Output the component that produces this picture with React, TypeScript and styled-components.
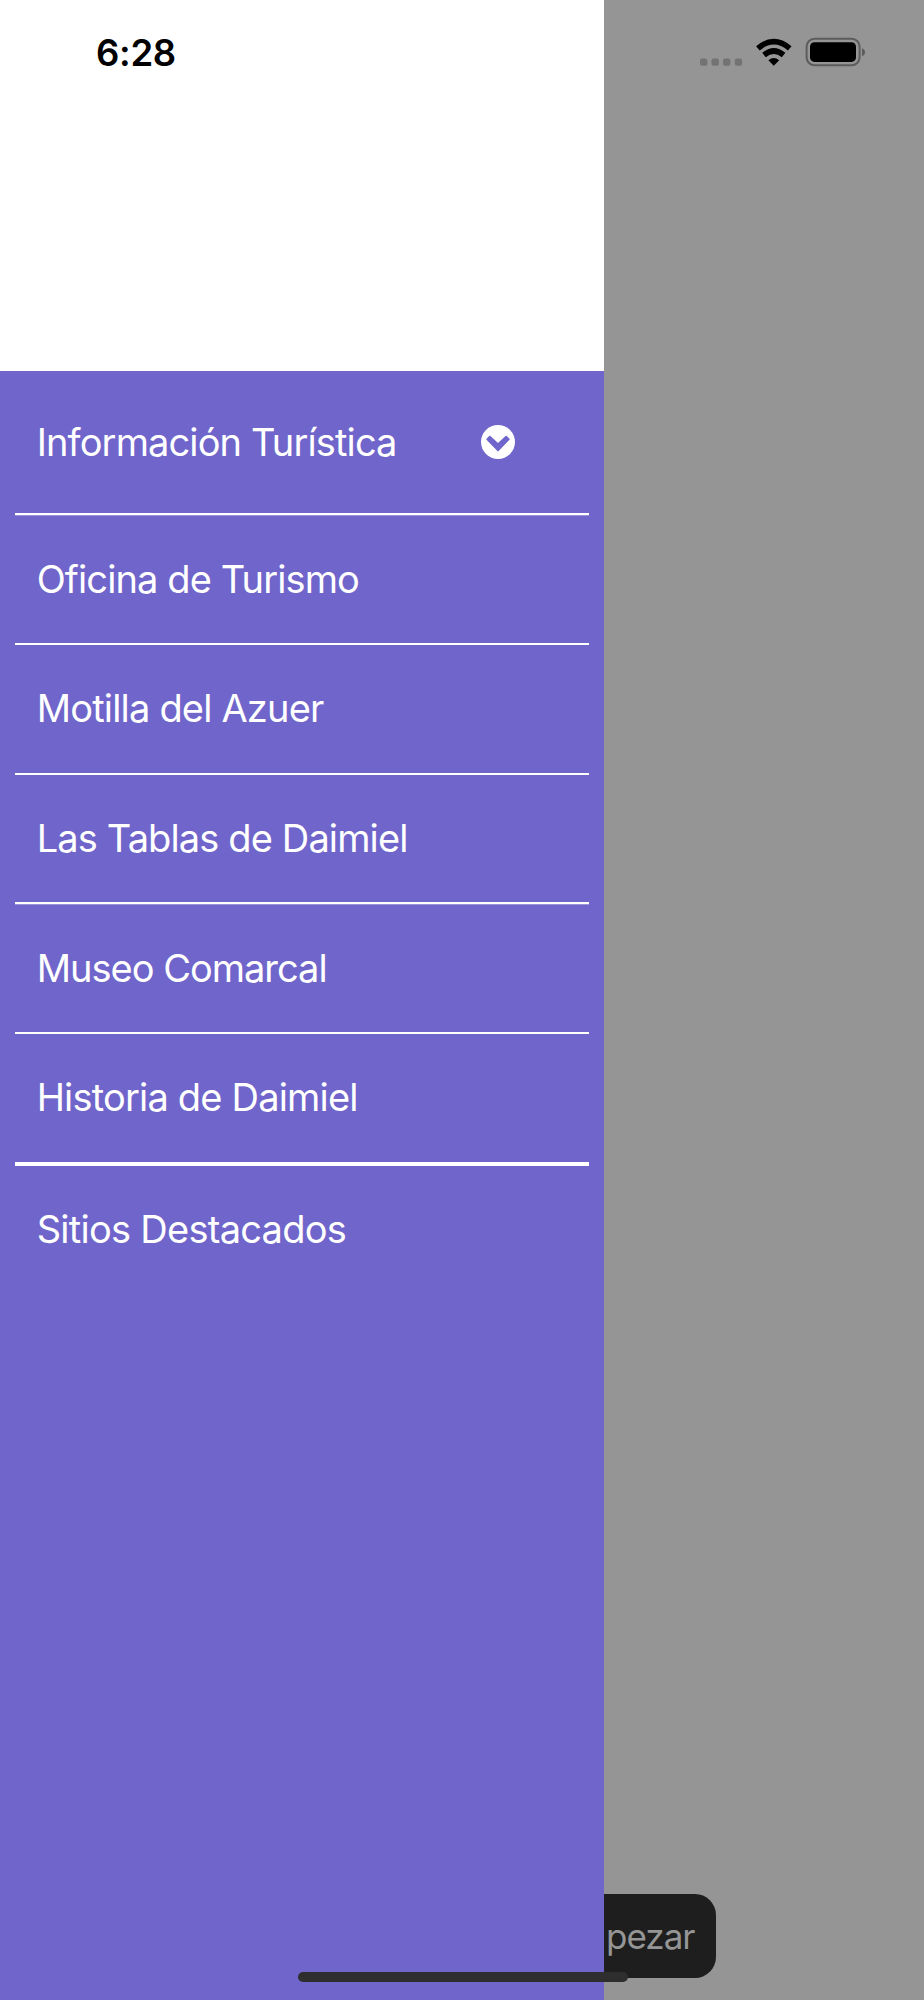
import React from 'react';
import styled, { createGlobalStyle } from 'styled-components';

const GlobalStyle = createGlobalStyle`
  body { margin: 0; background: #959595; }
  * { box-sizing: border-box; }
`;

const Screen = styled.div`
  position: relative;
  display: flex;
  width: 924px;
  height: 2000px;
  overflow: hidden;
  background: #959595;
  font-family: Inter, 'Liberation Sans', sans-serif;
`;

const StatusBar = styled.header`
  position: absolute;
  top: 0;
  left: 0;
  z-index: 1;
  display: flex;
  justify-content: space-between;
  width: 100%;
  height: 104px;
  padding: 0 58px 0 96px;
`;

const Time = styled.span`
  font-size: 36.5px;
  font-weight: 600;
  line-height: 107px;
  letter-spacing: -0.3px;
  color: #000;
`;

const StatusIcons = styled.div`
  display: flex;
  align-items: flex-start;
  padding-top: 37px;
`;

const Drawer = styled.aside`
  display: flex;
  flex: none;
  flex-direction: column;
  width: 604px;
  background: #6f65cb;
`;

const DrawerHeader = styled.div`
  height: 371px;
  background: #fff;
`;

const Menu = styled.nav`
  display: flex;
  flex-direction: column;
  padding: 0 15px;
`;

const MenuItem = styled.a<{ $height: number; $lift: number }>`
  display: flex;
  align-items: center;
  height: ${(p) => p.$height}px;
  padding: 0 74.5px ${(p) => p.$lift}px 21.7px;
`;

const Label = styled.span<{ $tracking: number }>`
  flex: 1;
  font-size: 38px;
  line-height: 48px;
  letter-spacing: ${(p) => p.$tracking}px;
  white-space: nowrap;
  color: #fff;
`;

const Divider = styled.svg`
  display: block;
  width: 574px;
`;

const Backdrop = styled.main`
  display: flex;
  flex: 1;
  flex-direction: column;
  justify-content: flex-end;
  align-items: flex-start;
  padding-bottom: 22px;
`;

const StartButton = styled.button`
  width: 112px;
  height: 84.5px;
  padding: 0 0 0 2px;
  border: 0;
  border-radius: 0 21px 21px 0;
  background: #1e1e1e;
  color: #959595;
  font: 400 35px/84px Inter, 'Liberation Sans', sans-serif;
  letter-spacing: -1px;
  text-align: left;
`;

const HomeIndicator = styled.div`
  position: absolute;
  left: 297.5px;
  bottom: 18px;
  width: 330px;
  height: 10.5px;
  border-radius: 6px;
  background: #2e2e2e;
`;

const ChevronCircle = () => (
  <svg width="34" height="34" viewBox="0 0 100 100">
    <circle cx="50" cy="50" r="50" fill="#fff" />
    <path
      d="M18 42 L26 34 L50 56 L74 34 L82 42 L50 75 Z"
      fill="#6f65cb"
      stroke="#6f65cb"
      strokeWidth="5"
      strokeLinejoin="round"
    />
  </svg>
);

const items = [
  { label: 'Información Turística', height: 142.3, lift: 0, line: 2.3, tracking: -0.87, expandable: true },
  { label: 'Oficina de Turismo', height: 127.4, lift: 1, line: 2.3, tracking: -0.89 },
  { label: 'Motilla del Azuer', height: 127.4, lift: 1, line: 2.3, tracking: -0.81 },
  { label: 'Las Tablas de Daimiel', height: 127.4, lift: 2, line: 2.3, tracking: -0.87 },
  { label: 'Museo Comarcal', height: 127.4, lift: 1, line: 2.3, tracking: -1 },
  { label: 'Historia de Daimiel', height: 127.4, lift: 2, line: 4.6, tracking: -0.81 },
  { label: 'Sitios Destacados', height: 127.4, lift: 2, line: 0, tracking: -0.73 },
];

export default function App() {
  return (
    <>
      <GlobalStyle />
      <Screen>
        <Drawer>
          <DrawerHeader />
          <Menu>
            {items.map((item) => (
              <React.Fragment key={item.label}>
                <MenuItem $height={item.height} $lift={item.lift}>
                  <Label $tracking={item.tracking}>{item.label}</Label>
                  {item.expandable && <ChevronCircle />}
                </MenuItem>
                {item.line > 0 && (
                  <Divider height={item.line}>
                    <rect width="574" height={item.line} fill="#fff" />
                  </Divider>
                )}
              </React.Fragment>
            ))}
          </Menu>
        </Drawer>
        <Backdrop>
          <StartButton>pezar</StartButton>
        </Backdrop>
        <StatusBar>
          <Time>6:28</Time>
          <StatusIcons>
            <svg width="166" height="32" viewBox="700 37 166 32">
              <g fill="#737373">
                <rect x="700" y="58.5" width="7.4" height="7.2" rx="2" />
                <rect x="711.5" y="58.5" width="7.4" height="7.2" rx="2" />
                <rect x="723" y="58.5" width="7.4" height="7.2" rx="2" />
                <rect x="734.7" y="58.5" width="7.4" height="7.2" rx="2" />
              </g>
              <g fill="none" stroke="#000" strokeWidth="5.6">
                <path d="M757.9 48.4 Q773.8 35 789.7 48.4" />
                <path d="M764 55 Q773.8 47 783.6 55" />
              </g>
              <path d="M768.4 60.2 Q773.8 55.6 779.2 60.2 L773.8 65.8 Z" fill="#000" />
              <rect x="806.6" y="38.7" width="53" height="26.6" rx="8" fill="none" stroke="#5c5c5c" strokeWidth="2" />
              <rect x="810" y="42.3" width="46" height="19.6" rx="4.5" fill="#000" />
              <path d="M862 48.2 Q865 49.4 865 52.2 Q865 55 862 56.2 Z" fill="#5c5c5c" />
            </svg>
          </StatusIcons>
        </StatusBar>
        <HomeIndicator />
      </Screen>
    </>
  );
}
